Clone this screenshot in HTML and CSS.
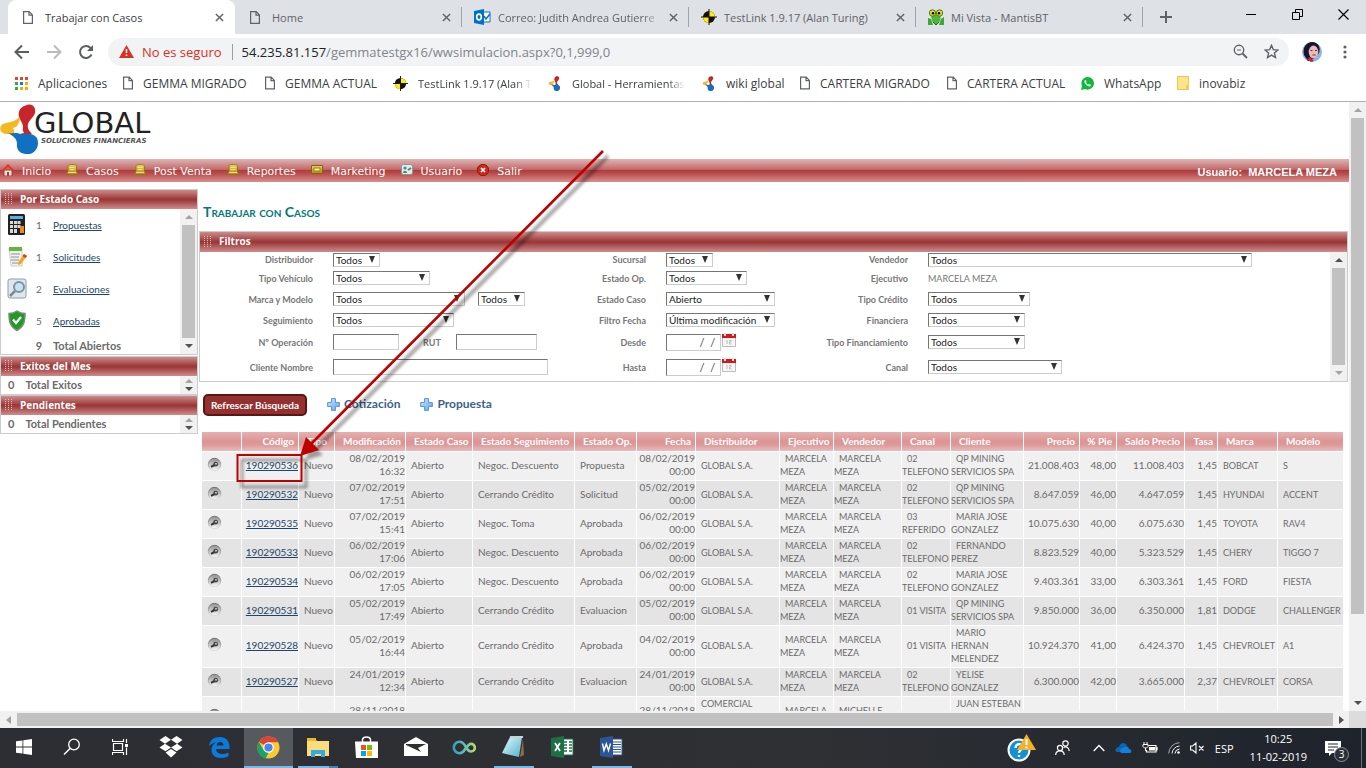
FILE: index.html
```html
<!DOCTYPE html>
<html lang="es">
<head>
<meta charset="utf-8">
<title>Trabajar con Casos</title>
<link rel="stylesheet" href="styles.css">
</head>
<body>
<svg class="defs" aria-hidden="true">
  <defs>
    <linearGradient id="gGold" x1="0" y1="0" x2="0" y2="1"><stop offset="0" stop-color="#ecd45c"/><stop offset="1" stop-color="#b08a17"/></linearGradient>
    <linearGradient id="gBlue" x1="0" y1="0" x2="1" y2="1"><stop offset="0" stop-color="#c9e6ff"/><stop offset="1" stop-color="#5fa3ea"/></linearGradient>
    <linearGradient id="gGrey" x1="0" y1="0" x2="0" y2="1"><stop offset="0" stop-color="#8f8f8f"/><stop offset="1" stop-color="#fafafa"/></linearGradient>
    <linearGradient id="gRim" x1="0" y1="0" x2="0" y2="1"><stop offset="0" stop-color="#6f6f6f"/><stop offset="1" stop-color="#dcdcdc"/></linearGradient>
    <linearGradient id="gPad" x1="0" y1="0" x2="1" y2="1"><stop offset="0" stop-color="#e8f8fc"/><stop offset="1" stop-color="#4fb2cc"/></linearGradient>
    <linearGradient id="gLoop" x1="0" y1="0" x2="1" y2="0"><stop offset="0" stop-color="#35a0b8"/><stop offset=".6" stop-color="#6fc2b0"/><stop offset="1" stop-color="#b5e067"/></linearGradient>
    <symbol id="page" viewBox="0 0 10 13"><path d="M.6.6h5.6l3.2 3.3v8.5H.6z M6 .6v3.5h3.4" fill="none" stroke="#5f6368" stroke-width="1.2"/></symbol>
    <symbol id="cross" viewBox="0 0 10 10"><path d="M1 1l8 8M9 1l-8 8" stroke="#5f6368" stroke-width="1.6" fill="none"/></symbol>
    <symbol id="testlink" viewBox="0 0 16 16"><circle cx="8" cy="8" r="6" fill="#111"/><path d="M8 8V2a6 6 0 0 1 6 6zM8 8v6a6 6 0 0 1-6-6z" fill="#ffee00"/><path d="M8 0v16M0 8h16" stroke="#111" stroke-width="1"/></symbol>
    <symbol id="molecule" viewBox="0 0 39 50"><path d="M27 1c6-2 9 3 8 8-1 4-6 7-7 11-1 4 1 7 4 10H20c3-3 4-7 2-11-3-5-4-8-3-11 1-4 4-6 8-7z" fill="#c8242a"/><path d="M19 13c3 4-4 10-5 17H6c-6-1-8-7-3-10 6-2 12-2 16-7z" fill="#f5b920"/><path d="M13 24l7-3 4 8-8 2z" fill="#fff"/><path d="M8 29c7 1 8-1 12 1 7-1 13-1 17 4 3 7-1 15-8 16-8 1-13-4-12-10 0-6-4-8-9-11z" fill="#1170c2"/></symbol>
    <symbol id="grip" viewBox="0 0 8 11"><g fill="#e3b9b9"><path d="M0 0h1v1H0zM3 0h1v1H3zM6 0h1v1H6zM0 2h1v1H0zM3 2h1v1H3zM6 2h1v1H6zM0 4h1v1H0zM3 4h1v1H3zM6 4h1v1H6zM0 6h1v1H0zM3 6h1v1H3zM6 6h1v1H6zM0 8h1v1H0zM3 8h1v1H3zM6 8h1v1H6zM0 10h1v1H0zM3 10h1v1H3zM6 10h1v1H6z"/></g></symbol>
    <symbol id="folderY" viewBox="0 0 12 12"><path d="M2 2.500Q2 .5 4 .5h4.500q2 0 2 2V8h1v2.500H1V8h1z" fill="url(#gGold)" stroke="#8d7413" stroke-width=".8"/><path d="M3.500 3.500h5M3.500 5.500h5M2 8.500h8" stroke="#f8eda0" stroke-width=".8"/></symbol>
    <symbol id="plus" viewBox="0 0 13 13"><path d="M4.500.6h4v3.900h3.900v4H8.500v3.900h-4V8.500H.6v-4h3.900z" fill="url(#gBlue)" stroke="#5c98d8"/></symbol>
    <symbol id="cal" viewBox="0 0 14 14"><path d="M.5 4h13v9.500H.5z" fill="#f6f6f6" stroke="#bbb"/><path d="M0 1h14v4H0z" fill="#d9151c"/><path d="M3 0v3M11 0v3" stroke="#ddd" stroke-width="2"/><path d="M5 7v4M7 7.500h2v1.500H7.500V11H9.500" stroke="#bbb" fill="none"/></symbol>
    <symbol id="lens" viewBox="0 0 15 15"><circle cx="7.500" cy="7.500" r="6.200" fill="url(#gGrey)" stroke="url(#gRim)"/><path d="M7.500 8L4 9.800" stroke="#333" stroke-width="2"/><circle cx="8.700" cy="7.200" r="2.400" fill="#444"/><circle cx="9" cy="6.800" r="1" fill="#c9c9c9"/></symbol>
  </defs>
</svg>

<div class="window">
  <header class="tabs">
    <div class="tab tab-active"><svg width="10" height="13"><use href="#page"/></svg><span class="tab-name">Trabajar con Casos</span><button class="bare" aria-label="Cerrar"><svg width="9" height="9"><use href="#cross"/></svg></button></div>
    <div class="tab"><svg width="10" height="13"><use href="#page"/></svg><span class="tab-name">Home</span><button class="bare" aria-label="Cerrar"><svg width="9" height="9"><use href="#cross"/></svg></button></div>
    <div class="tab tab-wide"><svg width="17" height="16" viewBox="0 0 17 16"><path d="M8 3h8v10H8z" fill="#fff" stroke="#0072c6"/><path d="M10 7l2 3 4-5" stroke="#0072c6" fill="none" stroke-width="1.500"/><path d="M0 2l10-2v16L0 14z" fill="#0072c6"/><ellipse cx="5" cy="8" rx="2.300" ry="2.900" fill="none" stroke="#fff" stroke-width="1.600"/></svg><span class="tab-name fade">Correo: Judith Andrea Gutierre</span><button class="bare" aria-label="Cerrar"><svg width="9" height="9"><use href="#cross"/></svg></button></div>
    <div class="tab tab-wide"><svg width="16" height="16"><use href="#testlink"/></svg><span class="tab-name">TestLink 1.9.17 (Alan Turing)</span><button class="bare" aria-label="Cerrar"><svg width="9" height="9"><use href="#cross"/></svg></button></div>
    <div class="tab tab-wide"><svg width="16" height="16" viewBox="0 0 16 16"><path d="M0 16V9l3 1 2 6zM16 16V8l-3 2-2 6z" fill="#3fa535"/><path d="M3 6h10l-1 6-4 4-4-4z" fill="#4fb53c"/><path d="M5 13l3 3 3-3" stroke="#14691d" fill="none"/><circle cx="4.500" cy="4" r="3.200" fill="#f5d423" stroke="#3c7d22"/><circle cx="11.500" cy="4" r="3.200" fill="#f5d423" stroke="#3c7d22"/><circle cx="5" cy="4.300" r="1.200"/><circle cx="11" cy="4.300" r="1.200"/></svg><span class="tab-name">Mi Vista - MantisBT</span><button class="bare" aria-label="Cerrar"><svg width="9" height="9"><use href="#cross"/></svg></button></div>
    <button class="bare new-tab" aria-label="Nueva pestaña"><svg width="12" height="12"><path d="M6 0v12M0 6h12" stroke="#5f6368" stroke-width="2"/></svg></button>
    <div class="win-buttons">
      <button class="bare" aria-label="Minimizar"><svg width="11" height="11"><path d="M0 5.500h10" stroke="#000"/></svg></button>
      <button class="bare" aria-label="Restaurar"><svg width="11" height="11"><path d="M.5 3.500h7v7h-7zM3.500 3V.5h7v7H8" fill="none" stroke="#000"/></svg></button>
      <button class="bare" aria-label="Cerrar ventana"><svg width="11" height="11"><path d="M.5.5l10 10M10.500.5l-10 10" stroke="#000" stroke-width="1.200"/></svg></button>
    </div>
  </header>

  <div class="toolbar">
    <button class="bare nav" aria-label="Atrás"><svg width="16" height="16"><path d="M15 8H2M8 1.500L1.500 8 8 14.500" fill="none" stroke="#5a5d61" stroke-width="2"/></svg></button>
    <button class="bare nav" aria-label="Adelante"><svg width="16" height="16"><path d="M1 8h13M8 1.500L14.500 8 8 14.500" fill="none" stroke="#b9bbbe" stroke-width="2"/></svg></button>
    <button class="bare nav" aria-label="Recargar"><svg width="16" height="16"><path d="M13.500 10.500A6 6 0 1 1 12.500 4" fill="none" stroke="#5a5d61" stroke-width="2"/><path d="M15 1v6H9z" fill="#5a5d61"/></svg></button>
    <div class="omnibox">
      <svg width="15" height="13" viewBox="0 0 15 13"><path d="M7.500 0L15 13H0z" fill="#d93025"/><path d="M7.500 4v4M7.500 9.500v1.500" stroke="#fff" stroke-width="1.500"/></svg>
      <span class="insecure">No es seguro</span>
      <span class="url"><b>54.235.81.157</b>/gemmatestgx16/wwsimulacion.aspx?0,1,999,0</span>
      <svg width="15" height="15"><circle cx="6" cy="6" r="4.700" fill="none" stroke="#5f6368" stroke-width="1.400"/><path d="M9.500 9.500L14 14" stroke="#5f6368" stroke-width="1.800"/><path d="M4 6h4" stroke="#5f6368"/></svg>
      <svg width="15" height="15" viewBox="0 0 15 15"><path d="M7.500 1.300l1.800 4.300 4.600.4-3.500 3 1.100 4.500-4-2.400-4 2.400 1.100-4.500-3.500-3 4.600-.4z" fill="none" stroke="#5f6368" stroke-width="1.400"/></svg>
    </div>
    <svg class="avatar" width="20" height="20" viewBox="0 0 20 20"><circle cx="10" cy="10" r="10" fill="#8fb4e6"/><path d="M2 13C0 5 5 0 10 0c6 0 9 5 7 11l-4 5-7 3z" fill="#17142f"/><ellipse cx="11.500" cy="10" rx="4.800" ry="6.500" fill="#eab9b8"/><path d="M5 17l3-2 4 4-3 1z" fill="#c02b30"/><path d="M8.500 8.500h2M13 8.500h2M10.500 13h3" stroke="#6b3040"/></svg>
    <svg class="dots" width="4" height="14"><g fill="#5f6368"><circle cx="2" cy="2" r="1.600"/><circle cx="2" cy="7" r="1.600"/><circle cx="2" cy="12" r="1.600"/></g></svg>
  </div>

  <nav class="bookmarks">
    <a href="#"><svg width="13" height="13"><path d="M0 0h3v3H0zM5 0h3v3H5zM10 0h3v3h-3z" fill="#ea4335"/><path d="M0 5h3v3H0zM0 10h3v3H0z" fill="#34a853"/><path d="M5 5h3v3H5z" fill="#1a73e8"/><path d="M10 5h3v3h-3zM5 10h3v3H5zM10 10h3v3h-3z" fill="#f9ab00"/></svg>Aplicaciones</a>
    <a href="#"><svg width="10" height="14"><use href="#page"/></svg>GEMMA MIGRADO</a>
    <a href="#"><svg width="10" height="14"><use href="#page"/></svg>GEMMA ACTUAL</a>
    <a href="#"><svg width="15" height="15"><use href="#testlink"/></svg><span class="clip">TestLink 1.9.17 (Alan T</span></a>
    <a href="#"><svg width="15" height="15"><use href="#molecule"/></svg><span class="clip">Global - Herramientas</span></a>
    <a href="#"><svg width="15" height="15"><use href="#molecule"/></svg>wiki global</a>
    <a href="#"><svg width="10" height="14"><use href="#page"/></svg>CARTERA MIGRADO</a>
    <a href="#"><svg width="10" height="14"><use href="#page"/></svg>CARTERA ACTUAL</a>
    <a href="#"><svg width="13" height="13" viewBox="0 0 13 13"><path d="M0 13l1-4A6.300 6.300 0 1 1 4 12z" fill="#10b93c"/><path d="M3.500 3.500c-1 2 3 6.500 5.500 6l1-1.500-2-1-1 .7L5 6l.5-1L5 3z" fill="#fff"/></svg>WhatsApp</a>
    <a href="#"><svg width="12" height="14"><path d="M.5.5h11v13H.5z" fill="#fce48b" stroke="#e8c555"/><path d="M9 9h3v4H9z" fill="#f4cf4e"/></svg>inovabiz</a>
  </nav>

  <div class="viewport">
    <div class="site">
      <div class="brand">
        <svg width="39" height="50"><use href="#molecule"/></svg>
        <div class="brand-text"><span class="brand-name">GLOBAL</span><span class="brand-sub">SOLUCIONES FINANCIERAS</span></div>
      </div>
      <nav class="menu">
        <a href="#"><svg width="12" height="12" viewBox="0 0 12 12"><path d="M2 6h8v6H2z" fill="#f4e9e2" stroke="#a33"/><path d="M0 6l6-6 6 6-1.500 1L6 3 1.500 7z" fill="#d63a24"/><path d="M5 8h2v4H5z" fill="#b33"/></svg>Inicio</a>
        <a href="#"><svg width="12" height="12"><use href="#folderY"/></svg>Casos</a>
        <a href="#"><svg width="12" height="12"><use href="#folderY"/></svg>Post Venta</a>
        <a href="#"><svg width="12" height="12"><use href="#folderY"/></svg>Reportes</a>
        <a href="#"><svg width="12" height="12" viewBox="0 0 12 12"><path d="M.5 1.500h11v8H.5z" fill="url(#gGold)" stroke="#7d6410"/><path d="M3 4h6v3H3z" fill="#fbf0a0" stroke="#9d7d14"/></svg>Marketing</a>
        <a href="#"><svg width="12" height="12" viewBox="0 0 12 12"><rect x=".5" y=".5" width="11" height="10" rx="2" fill="#e4e9ec" stroke="#8b979c"/><circle cx="4" cy="4" r="1.600" fill="#3f87c9"/><path d="M2 9c0-3 4-3 4 0z" fill="#3d9a43"/><path d="M7 6l3-2" stroke="#3d9a43" stroke-width="2"/></svg>Usuario</a>
        <a href="#"><svg width="12" height="12" viewBox="0 0 12 12"><circle cx="6" cy="6" r="5.700" fill="#cb2a1c" stroke="#8e1a12"/><path d="M4 4l4 4M8 4L4 8" stroke="#fff" stroke-width="1.600"/></svg>Salir</a>
        <span class="user">Usuario:&nbsp; MARCELA MEZA</span>
      </nav>

      <div class="columns">
        <aside class="side">
          <section class="panel">
            <h2 class="panel-head"><svg width="8" height="11"><use href="#grip"/></svg>Por Estado Caso</h2>
            <div class="panel-body">
              <ul class="states">
                <li><svg width="20" height="22" viewBox="0 0 20 22"><rect x="1" y="0" width="17" height="21" rx="1.500" fill="#222"/><path d="M3 2h13v3H3z" fill="#58b0e6"/><path d="M3 7h3v3H3zM7 7h3v3H7zM10.500 7h3v3h-3zM3 11h3v3H3zM7 11h3v3H7zM10.500 11h3v3h-3zM3 15h3v4H3zM7 15h3v4H7z" fill="#d8d8d8"/><path d="M13 12h4v7h-4z" fill="#f08a1c"/></svg><b class="n">1</b><a href="#">Propuestas</a></li>
                <li><svg width="20" height="22" viewBox="0 0 20 22"><path d="M2 2h13v18H4z" fill="#f1f1ef" stroke="#ccc"/><path d="M2 1h13v4H2z" fill="#67b436"/><path d="M4 8h9M4 11h8M4 14h8M5 17h9" stroke="#8a8f94"/><path d="M17 8l3 2-6 8-3 1 1-4z" fill="#f7a51c"/><path d="M17 8l3 2-1.500 2-3-2z" fill="#d33b2c"/></svg><b class="n">1</b><a href="#">Solicitudes</a></li>
                <li><svg width="20" height="22" viewBox="0 0 20 22"><rect x="1" y="1" width="18" height="19" rx="2" fill="#dfe6ec" stroke="#8fa0ad"/><circle cx="12" cy="9" r="5" fill="#c6e3f5" stroke="#7d93a3" stroke-width="2"/><path d="M8 13l-5 5" stroke="#7b8a94" stroke-width="2.500"/></svg><b class="n">2</b><a href="#">Evaluaciones</a></li>
                <li><svg width="20" height="22" viewBox="0 0 20 22"><path d="M10 1c3 2 5 2.500 8 2.500 0 8-1 13-8 17C3 16.500 2 11.500 2 3.500 5 3.500 7 3 10 1z" fill="#1f9a22" stroke="#7c8b80" stroke-width="1.500"/><path d="M6 9.500l3 3.500 5-6" fill="none" stroke="#fff" stroke-width="2.200"/></svg><b class="n">5</b><a href="#">Aprobadas</a></li>
                <li class="total"><i></i><b class="n">9</b><b>Total Abiertos</b></li>
              </ul>
              <div class="bar"><i class="up dim"></i><i class="thumb"></i><i class="down"></i></div>
            </div>
          </section>
          <section class="panel">
            <h2 class="panel-head"><svg width="8" height="11"><use href="#grip"/></svg>Exitos del Mes</h2>
            <div class="panel-body"><p class="count"><b>0</b><b>Total Exitos</b></p><div class="bar tiny"><i class="up dim"></i><i class="down"></i></div></div>
          </section>
          <section class="panel">
            <h2 class="panel-head"><svg width="8" height="11"><use href="#grip"/></svg>Pendientes</h2>
            <div class="panel-body"><p class="count"><b>0</b><b>Total Pendientes</b></p><div class="bar tiny"><i class="up dim"></i><i class="down"></i></div></div>
          </section>
        </aside>

        <main class="main">
          <h1 class="title">Trabajar con Casos</h1>
          <section class="panel filters">
            <h2 class="panel-head"><svg width="8" height="11"><use href="#grip"/></svg>Filtros</h2>
            <div class="panel-body">
              <form class="form">
                <label for="dist">Distribuidor</label><div class="f"><span class="sel w47"><select id="dist"><option>Todos</option></select></span></div>
                <label for="suc">Sucursal</label><div class="f"><span class="sel w47"><select id="suc"><option>Todos</option></select></span></div>
                <label for="ven">Vendedor</label><div class="f"><span class="sel w324"><select id="ven"><option>Todos</option></select></span></div>

                <label for="veh">Tipo Vehículo</label><div class="f"><span class="sel w97"><select id="veh"><option>Todos</option></select></span></div>
                <label for="eop">Estado Op.</label><div class="f"><span class="sel w81"><select id="eop"><option>Todos</option></select></span></div>
                <span class="lab">Ejecutivo</span><div class="f value">MARCELA MEZA</div>

                <label for="mar">Marca y Modelo</label><div class="f"><span class="sel w132"><select id="mar"><option>Todos</option></select></span><span class="sel w47"><select aria-label="Modelo"><option>Todos</option></select></span></div>
                <label for="eca">Estado Caso</label><div class="f"><span class="sel w109"><select id="eca"><option>Abierto</option></select></span></div>
                <label for="cre">Tipo Crédito</label><div class="f"><span class="sel w102"><select id="cre"><option>Todos</option></select></span></div>

                <label for="seg">Seguimiento</label><div class="f"><span class="sel w121"><select id="seg"><option>Todos</option></select></span></div>
                <label for="ffe">Filtro Fecha</label><div class="f"><span class="sel w109"><select id="ffe"><option>Última modificación</option></select></span></div>
                <label for="fin">Financiera</label><div class="f"><span class="sel w97"><select id="fin"><option>Todos</option></select></span></div>

                <label for="nop">Nº Operación</label><div class="f"><input id="nop" class="w66" type="text"><label class="rut" for="rut">RUT</label><input id="rut" class="w81" type="text"></div>
                <label for="des">Desde</label><div class="f date"><input id="des" class="w55" type="text" value="/  / "><svg width="14" height="14"><use href="#cal"/></svg></div>
                <label for="tfi">Tipo Financiamiento</label><div class="f"><span class="sel w97"><select id="tfi"><option>Todos</option></select></span></div>

                <label for="cli">Cliente Nombre</label><div class="f"><input id="cli" class="w215" type="text"></div>
                <label for="has">Hasta</label><div class="f date"><input id="has" class="w55" type="text" value="/  / "><svg width="14" height="14"><use href="#cal"/></svg></div>
                <label for="can">Canal</label><div class="f"><span class="sel w134"><select id="can"><option>Todos</option></select></span></div>
              </form>
              <div class="bar"><i class="up"></i><i class="thumb"></i><i class="down dim"></i></div>
            </div>
          </section>

          <div class="actions">
            <button class="refresh">Refrescar Búsqueda</button>
            <a href="#"><svg width="13" height="13"><use href="#plus"/></svg>Cotización</a>
            <a href="#"><svg width="13" height="13"><use href="#plus"/></svg>Propuesta</a>
          </div>

          <table class="cases">
            <colgroup><col class="c39"><col class="c56"><col class="c35"><col class="c70"><col class="c66"><col class="c101"><col class="c61"><col class="c58"><col class="c83"><col class="c53"><col class="c67"><col class="c48"><col class="c72"><col class="c55"><col class="c36"><col class="c67"><col class="c32"><col class="c59"><col class="c65"></colgroup>
            <thead><tr><th></th><th class="r">Código</th><th>Tipo</th><th class="r">Modificación</th><th>Estado Caso</th><th>Estado Seguimiento</th><th>Estado Op.</th><th class="r">Fecha</th><th>Distribuidor</th><th>Ejecutivo</th><th>Vendedor</th><th>Canal</th><th>Cliente</th><th class="r">Precio</th><th class="r">% Pie</th><th class="r">Saldo Precio</th><th class="r">Tasa</th><th>Marca</th><th>Modelo</th></tr></thead>
            <tbody>
              <tr><td><svg width="15" height="15"><use href="#lens"/></svg></td><td class="r"><a href="#">190290536</a></td><td>Nuevo</td><td class="r">08/02/2019 16:32</td><td>Abierto</td><td>Negoc. Descuento</td><td>Propuesta</td><td class="r">08/02/2019 00:00</td><td class="caps">GLOBAL S.A.</td><td class="caps">MARCELA MEZA</td><td class="caps">MARCELA<br>MEZA</td><td class="caps">02<br>TELEFONO</td><td class="caps">QP MINING SERVICIOS SPA</td><td class="r">21.008.403</td><td class="r">48,00</td><td class="r">11.008.403</td><td class="r">1,45</td><td class="caps">BOBCAT</td><td class="caps">S</td></tr>
              <tr><td><svg width="15" height="15"><use href="#lens"/></svg></td><td class="r"><a href="#">190290532</a></td><td>Nuevo</td><td class="r">07/02/2019 17:51</td><td>Abierto</td><td>Cerrando Crédito</td><td>Solicitud</td><td class="r">05/02/2019 00:00</td><td class="caps">GLOBAL S.A.</td><td class="caps">MARCELA MEZA</td><td class="caps">MARCELA<br>MEZA</td><td class="caps">02<br>TELEFONO</td><td class="caps">QP MINING SERVICIOS SPA</td><td class="r">8.647.059</td><td class="r">46,00</td><td class="r">4.647.059</td><td class="r">1,45</td><td class="caps">HYUNDAI</td><td class="caps">ACCENT</td></tr>
              <tr><td><svg width="15" height="15"><use href="#lens"/></svg></td><td class="r"><a href="#">190290535</a></td><td>Nuevo</td><td class="r">07/02/2019 15:41</td><td>Abierto</td><td>Negoc. Toma</td><td>Aprobada</td><td class="r">06/02/2019 00:00</td><td class="caps">GLOBAL S.A.</td><td class="caps">MARCELA MEZA</td><td class="caps">MARCELA<br>MEZA</td><td class="caps">03<br>REFERIDO</td><td class="caps">MARIA JOSE GONZALEZ</td><td class="r">10.075.630</td><td class="r">40,00</td><td class="r">6.075.630</td><td class="r">1,45</td><td class="caps">TOYOTA</td><td class="caps">RAV4</td></tr>
              <tr><td><svg width="15" height="15"><use href="#lens"/></svg></td><td class="r"><a href="#">190290533</a></td><td>Nuevo</td><td class="r">06/02/2019 17:06</td><td>Abierto</td><td>Negoc. Descuento</td><td>Aprobada</td><td class="r">06/02/2019 00:00</td><td class="caps">GLOBAL S.A.</td><td class="caps">MARCELA MEZA</td><td class="caps">MARCELA<br>MEZA</td><td class="caps">02<br>TELEFONO</td><td class="caps">FERNANDO<br>PEREZ</td><td class="r">8.823.529</td><td class="r">40,00</td><td class="r">5.323.529</td><td class="r">1,45</td><td class="caps">CHERY</td><td class="caps">TIGGO 7</td></tr>
              <tr><td><svg width="15" height="15"><use href="#lens"/></svg></td><td class="r"><a href="#">190290534</a></td><td>Nuevo</td><td class="r">06/02/2019 17:05</td><td>Abierto</td><td>Negoc. Descuento</td><td>Aprobada</td><td class="r">06/02/2019 00:00</td><td class="caps">GLOBAL S.A.</td><td class="caps">MARCELA MEZA</td><td class="caps">MARCELA<br>MEZA</td><td class="caps">02<br>TELEFONO</td><td class="caps">MARIA JOSE GONZALEZ</td><td class="r">9.403.361</td><td class="r">33,00</td><td class="r">6.303.361</td><td class="r">1,45</td><td class="caps">FORD</td><td class="caps">FIESTA</td></tr>
              <tr><td><svg width="15" height="15"><use href="#lens"/></svg></td><td class="r"><a href="#">190290531</a></td><td>Nuevo</td><td class="r">05/02/2019 17:49</td><td>Abierto</td><td>Cerrando Crédito</td><td>Evaluacion</td><td class="r">05/02/2019 00:00</td><td class="caps">GLOBAL S.A.</td><td class="caps">MARCELA MEZA</td><td class="caps">MARCELA<br>MEZA</td><td class="caps one">01 VISITA</td><td class="caps">QP MINING SERVICIOS SPA</td><td class="r">9.850.000</td><td class="r">36,00</td><td class="r">6.350.000</td><td class="r">1,81</td><td class="caps">DODGE</td><td class="caps">CHALLENGER</td></tr>
              <tr><td><svg width="15" height="15"><use href="#lens"/></svg></td><td class="r"><a href="#">190290528</a></td><td>Nuevo</td><td class="r">05/02/2019 16:44</td><td>Abierto</td><td>Cerrando Crédito</td><td>Aprobada</td><td class="r">04/02/2019 00:00</td><td class="caps">GLOBAL S.A.</td><td class="caps">MARCELA MEZA</td><td class="caps">MARCELA<br>MEZA</td><td class="caps one">01 VISITA</td><td class="caps">MARIO<br>HERNAN<br>MELENDEZ</td><td class="r">10.924.370</td><td class="r">41,00</td><td class="r">6.424.370</td><td class="r">1,45</td><td class="caps">CHEVROLET</td><td class="caps">A1</td></tr>
              <tr><td><svg width="15" height="15"><use href="#lens"/></svg></td><td class="r"><a href="#">190290527</a></td><td>Nuevo</td><td class="r">24/01/2019 12:34</td><td>Abierto</td><td>Cerrando Crédito</td><td>Evaluacion</td><td class="r">24/01/2019 00:00</td><td class="caps">GLOBAL S.A.</td><td class="caps">MARCELA MEZA</td><td class="caps">MARCELA<br>MEZA</td><td class="caps">02<br>TELEFONO</td><td class="caps">YELISE<br>GONZALEZ</td><td class="r">6.300.000</td><td class="r">42,00</td><td class="r">3.665.000</td><td class="r">2,37</td><td class="caps">CHEVROLET</td><td class="caps">CORSA</td></tr>
              <tr><td><svg width="15" height="15"><use href="#lens"/></svg></td><td></td><td></td><td class="r">28/11/2018<br>&nbsp;</td><td></td><td></td><td></td><td class="r">28/11/2018<br>&nbsp;</td><td class="caps">COMERCIAL<br>&nbsp;<br>&nbsp;</td><td class="caps">MARCELA<br>&nbsp;</td><td class="caps">MICHELLE<br>&nbsp;</td><td></td><td class="caps">JUAN ESTEBAN<br>&nbsp;<br>&nbsp;</td><td></td><td></td><td></td><td></td><td></td><td></td></tr>
            </tbody>
          </table>
        </main>
      </div>
    </div>
    <div class="bar page-bar"><i class="up dim"></i><i class="thumb"></i><i class="down"></i></div>
    <div class="hbar"><i class="left"></i><i class="hthumb"></i><i class="right"></i></div>
    <div class="corner"></div>
  </div>

  <footer class="taskbar">
    <button class="bare task narrow" aria-label="Inicio"><svg width="16" height="16"><path d="M0 2.300L6.500 1.400V7.600H0zM7.300 1.300L16 0v7.600H7.300zM0 8.400h6.500v6.200L0 13.700zM7.300 8.400H16V16l-8.700-1.300z" fill="#fff"/></svg></button>
    <button class="bare task narrow" aria-label="Buscar"><svg width="18" height="18"><circle cx="11" cy="6.500" r="5.300" fill="none" stroke="#fff" stroke-width="1.300"/><path d="M7.300 10.300L1 16.500" stroke="#fff" stroke-width="1.500"/></svg></button>
    <button class="bare task narrow" aria-label="Vista de tareas"><svg width="17" height="16"><path d="M1.500 4.500h9v7h-9zM.5 0v2.500h11V0M.5 16v-2.500h11V16M14.500 0v4M14.500 8.500V16" fill="none" stroke="#fff" stroke-width="1.200"/><path d="M13 5h3v3h-3z" fill="#fff"/></svg></button>
    <div class="pinned">
      <button class="bare task" aria-label="Dropbox"><svg width="24" height="22"><path d="M6.500 0L12 3.800 6 7.700.5 4zM17.500 0L12 3.800l6 3.900L23.500 4zM.5 11.500L6 7.700l6 3.900-5.500 3.600zM23.500 11.500L18 7.700l-6 3.900 5.500 3.600zM6.500 16.500L12 13l5.500 3.500-5.500 5z" fill="#fff"/></svg></button>
      <button class="bare task" aria-label="Edge"><svg width="21" height="21" viewBox="0 0 21 21"><path d="M0 9C1 3 5 0 11 0c7 0 10 5 9.500 12H7c0 3 3 5 6.500 5 2 0 4-.5 6-1.500V19c-2 1.500-5 2-8 2C6 21 2.500 17.500 2.500 13c0-4 2-6 5-8C4 6 2 7 0 9zm7.500-.5h7C14.500 6 13 5 11 5S8 6.500 7.500 8.500z" fill="#0a7bdc"/></svg></button>
      <button class="bare task active" aria-label="Chrome"><svg width="23" height="23" viewBox="0 0 24 24"><circle cx="12" cy="12" r="11.500" fill="#fcc934"/><path d="M12 12L2 6.200A11.500 11.500 0 0 1 22.200 6.500H12z" fill="#dc4437"/><path d="M2 6.200l5.200 9L12 17.500l-3 6A11.500 11.500 0 0 1 2 6.200z" fill="#1da462"/><circle cx="12" cy="12" r="5.500" fill="#fff"/><circle cx="12" cy="12" r="4.300" fill="#4a86f0"/></svg></button>
      <button class="bare task open multi" aria-label="Explorador"><svg width="22" height="19" viewBox="0 0 22 19"><path d="M0 1h8l2 2h12v15H0z" fill="#fbdc7c"/><path d="M0 0h9v3H0z" fill="#e9b92f"/><path d="M4 19v-7h14v7h-4v-3H8v3z" fill="#35aae2"/></svg></button>
      <button class="bare task" aria-label="Tienda"><svg width="23" height="23"><path d="M7.500 6V3.500C8 0 15 0 15.500 3.500V6" stroke="#fff" stroke-width="1.500" fill="none"/><path d="M0 5.500h23V22H1z" fill="#fff"/><path d="M6 9h5v5H6z" fill="#f25022"/><path d="M12 9h5v5h-5z" fill="#7fba00"/><path d="M6 15h5v5H6z" fill="#00a4ef"/><path d="M12 15h5v5h-5z" fill="#ffb900"/></svg></button>
      <button class="bare task" aria-label="Correo"><svg width="24" height="20"><path d="M0 7L12 0l12 7v12H0z" fill="#fff"/><path d="M2 7h20l-8 4 3 4L2 8z" fill="#2d2f33"/></svg></button>
      <button class="bare task" aria-label="Enlace"><svg width="25" height="15"><path d="M13.500 8.500C11.500 12 10 13.200 7.500 13.200a5.700 5.700 0 1 1 0-11.400c3 0 4.500 2 6 4.500l1.500 2.500c1.200 1.900 2.400 2.700 4 2.700a3.800 3.800 0 1 0 0-7.600c-2.500 0-3.700 2.500-5 4.600z" fill="none" stroke="url(#gLoop)" stroke-width="2.600"/></svg></button>
      <button class="bare task open" aria-label="Notas"><svg width="23" height="23"><path d="M21 3l1 16-4 2z" fill="#8e6f39"/><path d="M8 1h12l-3 20L0 17z" fill="url(#gPad)"/><path d="M8 1h13" stroke="#c8d2d6" stroke-width="2"/></svg></button>
      <button class="bare task" aria-label="Excel"><svg width="23" height="22"><path d="M11 3h11v16H11z" fill="#fff" stroke="#1d7044"/><path d="M13 6h3M18 6h3M13 9h3M18 9h3M13 12h3M18 12h3M13 15h3M18 15h3" stroke="#1d7044" stroke-width="1.500"/><path d="M0 2l13-2v22L0 20z" fill="#1d7044"/><path d="M4 7l5 8M9 7l-5 8" stroke="#fff" stroke-width="1.700"/></svg></button>
      <button class="bare task open" aria-label="Word"><svg width="23" height="22"><path d="M11 3h11v16H11z" fill="#fff" stroke="#2a5699"/><path d="M13 6h8M13 8.500h8M13 11h8M13 13.500h8M13 16h8" stroke="#2a5699"/><path d="M0 2l13-2v22L0 20z" fill="#2a5699"/><path d="M2.500 7.500l1.500 7 2.300-6.500 2.200 6.500L10.500 7.500" stroke="#fff" stroke-width="1.400" fill="none"/></svg></button>
    </div>
    <div class="tray">
      <svg width="29" height="30"><circle cx="12" cy="17" r="10.500" fill="#1591d3" stroke="#fff" stroke-width="2"/><path d="M8.500 15c0-5 7-5 7-1 0 3-3.500 3-3.500 6M12 22v2" stroke="#fff" stroke-width="2.200" fill="none"/><path d="M19.500 1L29 17H10z" fill="#f6b026"/><path d="M19.500 6v6M19.500 13.500v2" stroke="#fff" stroke-width="2"/></svg>
      <svg width="15" height="16"><g fill="none" stroke="#fff" stroke-width="1.200"><circle cx="5" cy="8" r="2.600"/><path d="M.7 15c0-5.500 8.500-5.500 8.500 0"/><circle cx="10.500" cy="3.500" r="2.700"/><path d="M8.500 7.500c3-1.500 5.700.5 5.700 3.500"/></g></svg>
      <svg width="12" height="8"><path d="M.7 7L6 1.500 11.300 7" fill="none" stroke="#fff" stroke-width="1.300"/></svg>
      <svg width="17" height="11" viewBox="0 0 17 11"><path d="M3 9C-1 9 0 4 4 4c1-5 7-5 8-1-4 0-6 3-5 6z" fill="#0a64b8"/><path d="M6 10c-2-3 0-5 2-5 1-3 6-2 6 1 3 0 3 4 1 4z" fill="#0f7fe0"/></svg>
      <svg width="16" height="12"><path d="M6.500 3.500h7.500v6.500H4.500V8M15 5v3.500" fill="none" stroke="#fff" stroke-width="1.200"/><path d="M7 5h6v3.500H7z" fill="#fff"/><path d="M1 2.500h5v2L4.500 6h-2L1 4.500zM2 0v2M5 0v2M3.500 6v3" fill="none" stroke="#fff"/></svg>
      <svg width="12" height="12"><g fill="none" stroke="#aaa"><path d="M.7 11.500A11 11 0 0 1 11.500.7" /><path d="M4 11.500A8 8 0 0 1 11.500 4" stroke="#eee"/><path d="M7 11.500A5 5 0 0 1 11.500 7" stroke="#fff"/></g><circle cx="10.500" cy="10.500" r="1.300" fill="#fff"/></svg>
      <svg width="15" height="12"><path d="M.6 4h2L6 1v10L2.600 8h-2zM9 4l4.500 4.500M13.500 4L9 8.500" fill="none" stroke="#fff" stroke-width="1.100"/></svg>
      <span>ESP</span>
      <span class="clock">10:25<br>11-02-2019</span>
      <span class="note"><svg width="17" height="15"><path d="M0 0h16v12H7l-3 3v-3H0z" fill="#fff"/><path d="M3 3h10M3 6h10M3 9h6" stroke="#20242c"/></svg><span class="badge">3</span></span>
    </div>
  </footer>

  <svg class="annotation" aria-hidden="true">
    <defs><filter id="soft" x="-20%" y="-20%" width="140%" height="140%"><feGaussianBlur stdDeviation="1.600"/></filter></defs>
    <g filter="url(#soft)" opacity=".35" transform="translate(5 5)"><path d="M603 151L311 444" stroke="#000" stroke-width="4"/><path d="M301 455l5-17 12 12z"/><path d="M237 455h64v27h-64z" fill="none" stroke="#000" stroke-width="3"/></g>
    <path d="M603 151L309 446" stroke="#bd0000" stroke-width="2.600"/><path d="M300 456l6-19 13 13z" fill="#bd0000"/>
    <path d="M237.500 455h64v26h-64z" fill="none" stroke="#bd0000" stroke-width="2"/>
  </svg>
</div>
</body>
</html>
```
FILE: styles.css
```css
* { box-sizing: border-box; }
body { margin: 0; font-family: "Open Sans", sans-serif; font-size: 12px; background: #fff; overflow: hidden; }
h1, h2, p, ul { margin: 0; padding: 0; }
svg { flex: none; display: block; }
.defs { position: absolute; width: 0; height: 0; }
.bare { border: 0; background: none; padding: 0; display: flex; align-items: center; justify-content: center; color: inherit; }
.window { position: relative; display: flex; flex-direction: column; height: 100vh; }

/* Browser tabs */
.tabs { display: flex; height: 34px; flex: none; background: #dee1e6; padding-left: 8px; font-size: 11px; color: #5f6368; }
.tab { display: flex; align-items: center; width: 227px; padding: 0 11px 0 15px; gap: 12px; background: linear-gradient(#a0a3a8, #a0a3a8) right center / 1px 20px no-repeat; }
.tab-wide { gap: 7px; padding-left: 12px; }
.tab-active { background: #fff; border-radius: 8px 8px 0 0; color: #3c4043; }
.tab-name { flex: 1; white-space: nowrap; overflow: hidden; }
.fade { -webkit-mask-image: linear-gradient(90deg, #000 88%, transparent); mask-image: linear-gradient(90deg, #000 88%, transparent); }
.new-tab { width: 46px; }
.win-buttons { display: flex; margin-left: auto; height: 28px; }
.win-buttons .bare { width: 46px; }

/* Address bar */
.toolbar { display: flex; align-items: center; height: 35px; flex: none; padding: 0 19px 0 6px; }
.nav { width: 32px; height: 28px; }
.omnibox { flex: 1; display: flex; align-items: center; height: 28px; margin-left: 6px; border-radius: 14px; background: #f1f3f4; padding: 0 10px 0 11px; font-size: 13px; gap: 16px; color: #80868b; }
.insecure { color: #d93025; margin-left: -8px; border-right: 1px solid #9a9da1; padding-right: 10px; line-height: 16px; white-space: nowrap; }
.url { flex: 1; margin-left: -7px; }
.url b { font-weight: 400; color: #202124; }
.avatar { margin: 0 21px 0 13px; }
.bookmarks { display: grid; grid-template-columns: 108px 142px 128px 154px 154px 99px 147px 134px 96px auto; align-items: center; height: 33px; flex: none; padding: 0 0 4px 15px; border-bottom: 1px solid #b0b0b0; }
.bookmarks a { display: flex; align-items: center; gap: 10px; color: #3c4043; text-decoration: none; white-space: nowrap; }
.clip { font-size: 11px; -webkit-mask-image: linear-gradient(90deg, #000 85%, transparent); mask-image: linear-gradient(90deg, #000 85%, transparent); }

/* Page and scroll bars */
.viewport { flex: 1; min-height: 0; display: grid; grid-template: minmax(0, 1fr) 17px / minmax(0, 1fr) 17px; }
.site { overflow: hidden; font-family: Lato, sans-serif; font-size: 10px; color: #6b6b6b; }
.bar { display: flex; flex-direction: column; align-items: center; justify-content: space-between; width: 17px; flex: none; background: #f1f1f1; padding: 6px 0; gap: 6px; }
.up, .down { border: 4px solid transparent; border-top-width: 0; border-bottom: 4px solid #505050; }
.down { border-bottom-width: 0; border-top: 4px solid #505050; }
.up.dim { border-bottom-color: #a3a3a3; }
.down.dim { border-top-color: #a3a3a3; }
.thumb { width: 13px; background: #c1c1c1; flex: 1; }
.page-bar .thumb { flex: none; height: 83%; margin-bottom: auto; }
.tiny { padding: 3px 0; gap: 0; }
.hbar { display: flex; align-items: center; justify-content: space-between; background: #f1f1f1; padding: 0 5px 0 6px; gap: 6px; }
.hthumb { flex: 1; height: 13px; background: #c1c1c1; }
.left, .right { border: 4px solid transparent; border-left-width: 0; border-right: 5px solid #a3a3a3; }
.right { border-right-width: 0; border-left: 5px solid #505050; }
.corner { background: #dcdcdc; }

/* Brand and menu */
.brand { display: flex; height: 57px; padding-top: 2px; color: #222; }
.brand-text { display: flex; flex-direction: column; margin-left: -5px; padding-top: 5px; }
.brand-name { font: 29px/28px "DejaVu Sans", sans-serif; height: 28px; }
.brand-sub { font: italic bold 7px/8px "DejaVu Sans", sans-serif; margin-left: 7px; color: #555; }
.menu { display: flex; align-items: center; height: 23px; padding: 3px 12px 0 2px; gap: 15px; font: 11px/14px "DejaVu Sans", sans-serif; color: #fff; background: linear-gradient(#dfb4b4, #c36a6a 45%, #ad3e3e 50%, #ba5050 65%, #d98f8f); }
.menu a { display: flex; align-items: center; gap: 8px; color: #fff; text-decoration: none; }
.menu svg { margin-bottom: 5px; }
.user { margin-left: auto; font: bold 11px/14px "Liberation Sans", sans-serif; }
.columns { display: flex; gap: 1px; padding-top: 7px; }

/* Panels */
.side { width: 198px; flex: none; }
.panel { border: 1px solid #ccc; }
.side .panel:first-child { margin-bottom: 1px; }
.panel-head { display: flex; align-items: center; gap: 7px; height: 19px; padding: 0 0 2px 4px; font: bold 10px/14px "Open Sans", sans-serif; color: #fff; background: linear-gradient(#cf8b8b, #9b3838 48%, #9b3838 52%, #d08c8c); }
.panel-body { display: flex; justify-content: space-between; }
.states { list-style: none; flex: 1; }
.states li { display: grid; grid-template-columns: 20px 24px 1fr; align-items: center; height: 32px; padding-left: 6px; }
.states .total { height: 17px; font-size: 11px; }
.n { text-align: center; font-weight: 400; }
.total .n { font-weight: 700; }
.site .states a, .cases a { color: #1d4669; text-decoration: underline; }
.states a, .states .total b + b { padding-left: 2px; }
.count { display: flex; gap: 11px; align-items: center; height: 18px; padding: 0 0 2px 7px; font-size: 11px; }

/* Filters */
.main { flex: 1; min-width: 0; }
.title { font-size: 14px; line-height: 14px; font-variant: small-caps; color: #007a7a; padding: 16px 0 12px 4px; }
.filters { margin-right: 1px; }
.filters .panel-head { height: 20px; }
.form { flex: 1; display: grid; grid-template-columns: 133px 223px 110px 152px 110px 1fr; grid-template-rows: 15px 22px 20px 22px 22px 28px; align-items: center; }
.form label, .lab { text-align: right; font-weight: 700; font-size: 9px; padding-right: 20px; color: #777; }
.f { display: flex; align-items: center; gap: 13px; }
.f .rut { padding: 0 2px 0 11px; }
.value { color: #777; font-size: 9px; }
.sel { position: relative; display: flex; height: 14px; }
.sel::after { content: ""; position: absolute; right: 5px; top: 3px; border: 3px solid transparent; border-top: 7px solid #333; border-bottom: 0; }
.sel select { appearance: none; width: 100%; height: 14px; border: 1px solid #ccc; border-top-color: #767676; border-left-color: #767676; background: #fff; font: 10px/12px Lato, sans-serif; color: #222; padding: 0 0 0 2px; border-radius: 0; }
.f input { height: 16px; border: 1px solid #ccc; border-top-color: #767676; border-left-color: #767676; padding: 0 2px; font: 11px/14px Lato, sans-serif; color: #444; }
.date { gap: 1px; }
.date input { text-align: right; height: 17px; white-space: pre; }
.date svg { margin-bottom: 5px; }
.w47 { width: 47px; }
.w55 { width: 55px; }
.w66 { width: 66px; }
.w81 { width: 81px; }
.w97 { width: 97px; }
.w102 { width: 102px; }
.w109 { width: 109px; }
.w121 { width: 121px; }
.w132 { width: 132px; }
.w134 { width: 134px; }
.w215 { width: 215px; }
.w324 { width: 324px; }

/* Actions */
.actions { display: flex; align-items: center; gap: 20px; padding: 12px 0 15px 4px; }
.actions a { display: flex; align-items: center; gap: 4px; color: #3d5f8e; font-size: 12px; line-height: 14px; font-weight: 700; text-decoration: none; padding-bottom: 2px; }
.refresh { width: 104px; height: 22px; border: 2px solid #5b1515; border-radius: 5px; background: #943030; color: #fff; font: bold 10px/14px Lato, sans-serif; padding: 0; white-space: nowrap; }

/* Cases */
.cases { table-layout: fixed; width: calc(100% - 7px); margin-left: 2px; border-spacing: 1px; line-height: 13px; }
.cases th { height: 19px; padding: 0; text-indent: 8px; text-align: left; color: #fff; white-space: nowrap; background: linear-gradient(#e6b0b0, #dc9494 50%, #dc9898 65%, #e9bcbc); }
.cases th.r { padding-right: 4px; text-indent: 0; }
.cases td { padding: 0 0 2px; height: 28px; text-indent: 5px; background: #f0f0f0; }
.cases tr:nth-child(even) td { background: #e4e4e4; }
.cases .r { text-align: right; text-indent: 0; }
.cases .caps { font-size: 9px; }
.cases .one { white-space: nowrap; }
.cases td svg { margin: 0 0 2px 5px; }
.c32 { width: 32px; }
.c35 { width: 35px; }
.c36 { width: 36px; }
.c39 { width: 39px; }
.c48 { width: 48px; }
.c53 { width: 53px; }
.c55 { width: 55px; }
.c56 { width: 56px; }
.c58 { width: 58px; }
.c59 { width: 59px; }
.c61 { width: 61px; }
.c65 { width: 65px; }
.c66 { width: 66px; }
.c67 { width: 67px; }
.c70 { width: 70px; }
.c72 { width: 72px; }
.c83 { width: 83px; }
.c101 { width: 101px; }

/* Taskbar */
.taskbar { display: flex; height: 40px; flex: none; color: #fff; background: linear-gradient(90deg, #2c2e33, #2e3034 60%, #1e232c); }
.task { width: 49px; height: 40px; border-bottom: 2px solid transparent; }
.narrow { width: 48px; }
.pinned { display: flex; margin-left: 2px; }
.active { background: #56595e; border-bottom-color: #76b9ed; }
.open { background: linear-gradient(#76b9ed, #76b9ed) center bottom / 40px 2px no-repeat border-box; }
.multi { background: linear-gradient(90deg, #76b9ed 78%, #4b7fae 78%) center bottom / 40px 2px no-repeat border-box; }
.tray { display: flex; align-items: center; margin-left: auto; gap: 10px; padding-right: 19px; margin-right: 4px; border-right: 1px solid #6b6f76; }
.tray > svg:first-child { margin-right: 9px; }
.tray > svg:nth-child(2) { margin-right: 13px; }
.tray > span { font-size: 11px; }
.tray > .clock { text-align: center; line-height: 18px; margin-left: 6px; }
.note { position: relative; margin-left: 8px; }
.badge { position: absolute; left: 9px; top: 6px; width: 15px; height: 15px; border: 1px solid #8b8f96; border-radius: 50%; background: #2b2f36; text-align: center; font-size: 10px; line-height: 13px; }

.annotation { position: absolute; left: 0; top: 0; width: 100%; height: 100%; pointer-events: none; }
```
